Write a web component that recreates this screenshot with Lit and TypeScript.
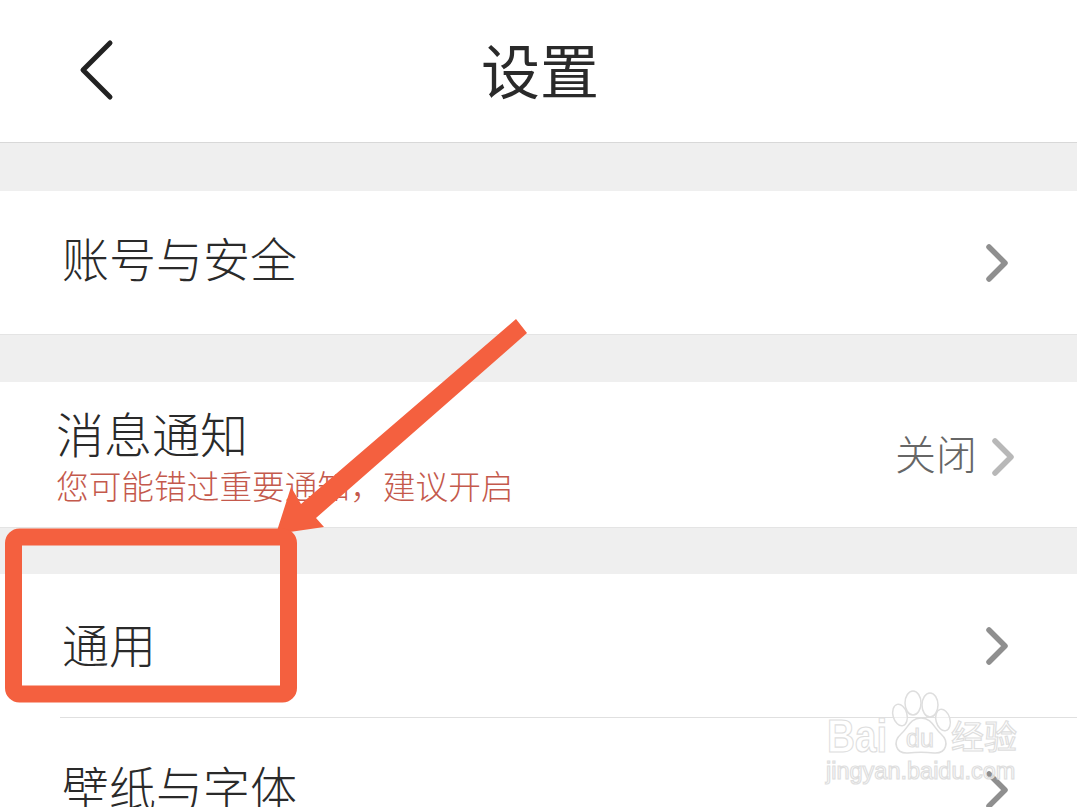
import { LitElement, css, html, svg } from 'lit';
import { customElement } from 'lit/decorators.js';

const chevron = (color: string) => html`
  <svg class="chevron" width="22" height="38" viewBox="0 0 22 38">
    <path d="M3 3 L19 19 L3 35" fill="none" stroke=${color} stroke-width="5.5" stroke-linecap="round" stroke-linejoin="round"></path>
  </svg>
`;

@customElement('app-root')
export class AppRoot extends LitElement {
  render() {
    return html`
      <div class="page">
        <header class="header">
          <svg class="back" width="38" height="64" viewBox="0 0 38 64">
            <path d="M32 5 L5 32 L32 59" fill="none" stroke="#222" stroke-width="5" stroke-linecap="round" stroke-linejoin="round"></path>
          </svg>
          <div class="title">设置</div>
        </header>

        <div class="gap"></div>
        <div class="row first">
          <span class="label">账号与安全</span>
          ${chevron('#8f8f8f')}
        </div>

        <div class="gap lined"></div>
        <div class="row notify">
          <div class="stack">
            <span class="label">消息通知</span>
            <span class="hint">您可能错过重要通知，建议开启</span>
          </div>
          <div class="side">
            <span class="value">关闭</span>
            ${chevron('#b8b8b8')}
          </div>
        </div>

        <div class="gap lined short"></div>
        <div class="row divided">
          <span class="label">通用</span>
          ${chevron('#8f8f8f')}
        </div>
        <div class="row">
          <span class="label">壁纸与字体</span>
          ${chevron('#8f8f8f')}
        </div>

        <svg class="markup" width="1077" height="807" viewBox="0 0 1077 807">
          ${svg`
            <path d="M516 319 L527 333 L316 518 L324 527 L276 534 L291 487 L301 504 Z" fill="#f4603f"></path>
            <rect x="13.5" y="537" width="275" height="157" rx="6" fill="none" stroke="#f4603f" stroke-width="17"></rect>
          `}
        </svg>

        <div class="watermark">
          <svg class="paw" width="192" height="70" viewBox="0 0 192 70">
            <g fill="#fff" fill-opacity="0.5" stroke="#dedede" stroke-width="1.5">
              <ellipse cx="87" cy="13" rx="8" ry="12"></ellipse>
              <ellipse cx="104" cy="15" rx="8" ry="12"></ellipse>
              <ellipse cx="74" cy="25" rx="7" ry="11" transform="rotate(-15 74 25)"></ellipse>
              <ellipse cx="117" cy="30" rx="7" ry="11" transform="rotate(-15 117 30)"></ellipse>
              <path d="M95 28 C84 28 82 38 75 44 C66 52 70 64 82 63 C90 62 100 62 108 63 C120 64 124 52 115 44 C108 38 106 28 95 28 Z"></path>
            </g>
          </svg>
          <span class="mark-bai">Bai</span>
          <span class="mark-du">du</span>
          <span class="mark-cn">经验</span>
          <span class="mark-url">jingyan.baidu.com</span>
        </div>
      </div>
    `;
  }

  static styles = css`
    :host {
      display: block;
    }

    .page {
      position: relative;
      width: 1077px;
      height: 807px;
      overflow: hidden;
      background: #fff;
      font-family: "Noto Sans CJK SC", "Noto Sans", sans-serif;
      color: #2a2a2a;
    }

    .header {
      box-sizing: border-box;
      height: 143px;
      display: grid;
      grid-template-columns: 1fr auto 1fr;
      align-items: center;
      padding-left: 78px;
      padding-bottom: 2px;
      border-bottom: 1px solid #d8d8d8;
    }

    .back {
      justify-self: start;
    }

    .title {
      font-size: 59px;
      line-height: 1;
      font-weight: 400;
      margin-left: -75px;
      padding-bottom: 3px;
    }

    .gap {
      box-sizing: border-box;
      height: 48px;
      background: #efefef;
    }

    .gap.lined {
      border-top: 1px solid #e4e4e4;
    }

    .gap.short {
      height: 47px;
    }

    .row {
      box-sizing: border-box;
      height: 143px;
      display: flex;
      align-items: center;
      justify-content: space-between;
      padding: 0 69px 0 62px;
      position: relative;
    }

    .row.divided {
      height: 144px;
    }

    .row.divided::after {
      content: "";
      position: absolute;
      left: 60px;
      right: 0;
      bottom: 0;
      height: 1px;
      background: #e0e0e0;
    }

    .notify {
      height: 145px;
      padding-left: 56px;
      padding-right: 63px;
    }

    .label {
      font-size: 47px;
      line-height: 1;
      font-weight: 300;
      padding-bottom: 8px;
    }

    .first .label {
      padding-bottom: 12px;
    }

    .notify .label {
      font-size: 48px;
    }

    .stack {
      display: flex;
      flex-direction: column;
      gap: 5px;
    }

    .hint {
      font-size: 32.7px;
      line-height: 1;
      font-weight: 300;
      color: #c4594c;
    }

    .side {
      display: flex;
      align-items: center;
      gap: 15px;
    }

    .value {
      font-size: 41px;
      line-height: 1;
      font-weight: 300;
      color: #666;
      margin-bottom: 4px;
    }

    .side .chevron {
      margin-top: 4px;
    }

    .chevron {
      display: block;
    }

    .markup {
      position: absolute;
      left: 0;
      top: 0;
    }

    .watermark {
      position: absolute;
      left: 826px;
      top: 690px;
      width: 192px;
      height: 96px;
      font-family: "Liberation Sans", sans-serif;
      color: rgba(255, 255, 255, 0.6);
      -webkit-text-stroke: 1.2px #dedede;
    }

    .paw {
      position: absolute;
      left: 0;
      top: 0;
    }

    .mark-bai,
    .mark-du,
    .mark-cn,
    .mark-url {
      position: absolute;
      line-height: 1;
      white-space: nowrap;
    }

    .mark-bai {
      left: 1px;
      top: 23px;
      font-size: 46px;
      font-weight: 700;
      transform: scaleX(0.84);
      transform-origin: left center;
    }

    .mark-du {
      left: 80px;
      top: 36px;
      font-size: 25px;
    }

    .mark-cn {
      left: 125px;
      top: 29px;
      font-size: 33px;
      font-family: "Noto Sans CJK SC", sans-serif;
    }

    .mark-url {
      left: 0;
      top: 70px;
      font-size: 23.5px;
    }
  `;
}

declare global {
  interface HTMLElementTagNameMap {
    'app-root': AppRoot;
  }
}
